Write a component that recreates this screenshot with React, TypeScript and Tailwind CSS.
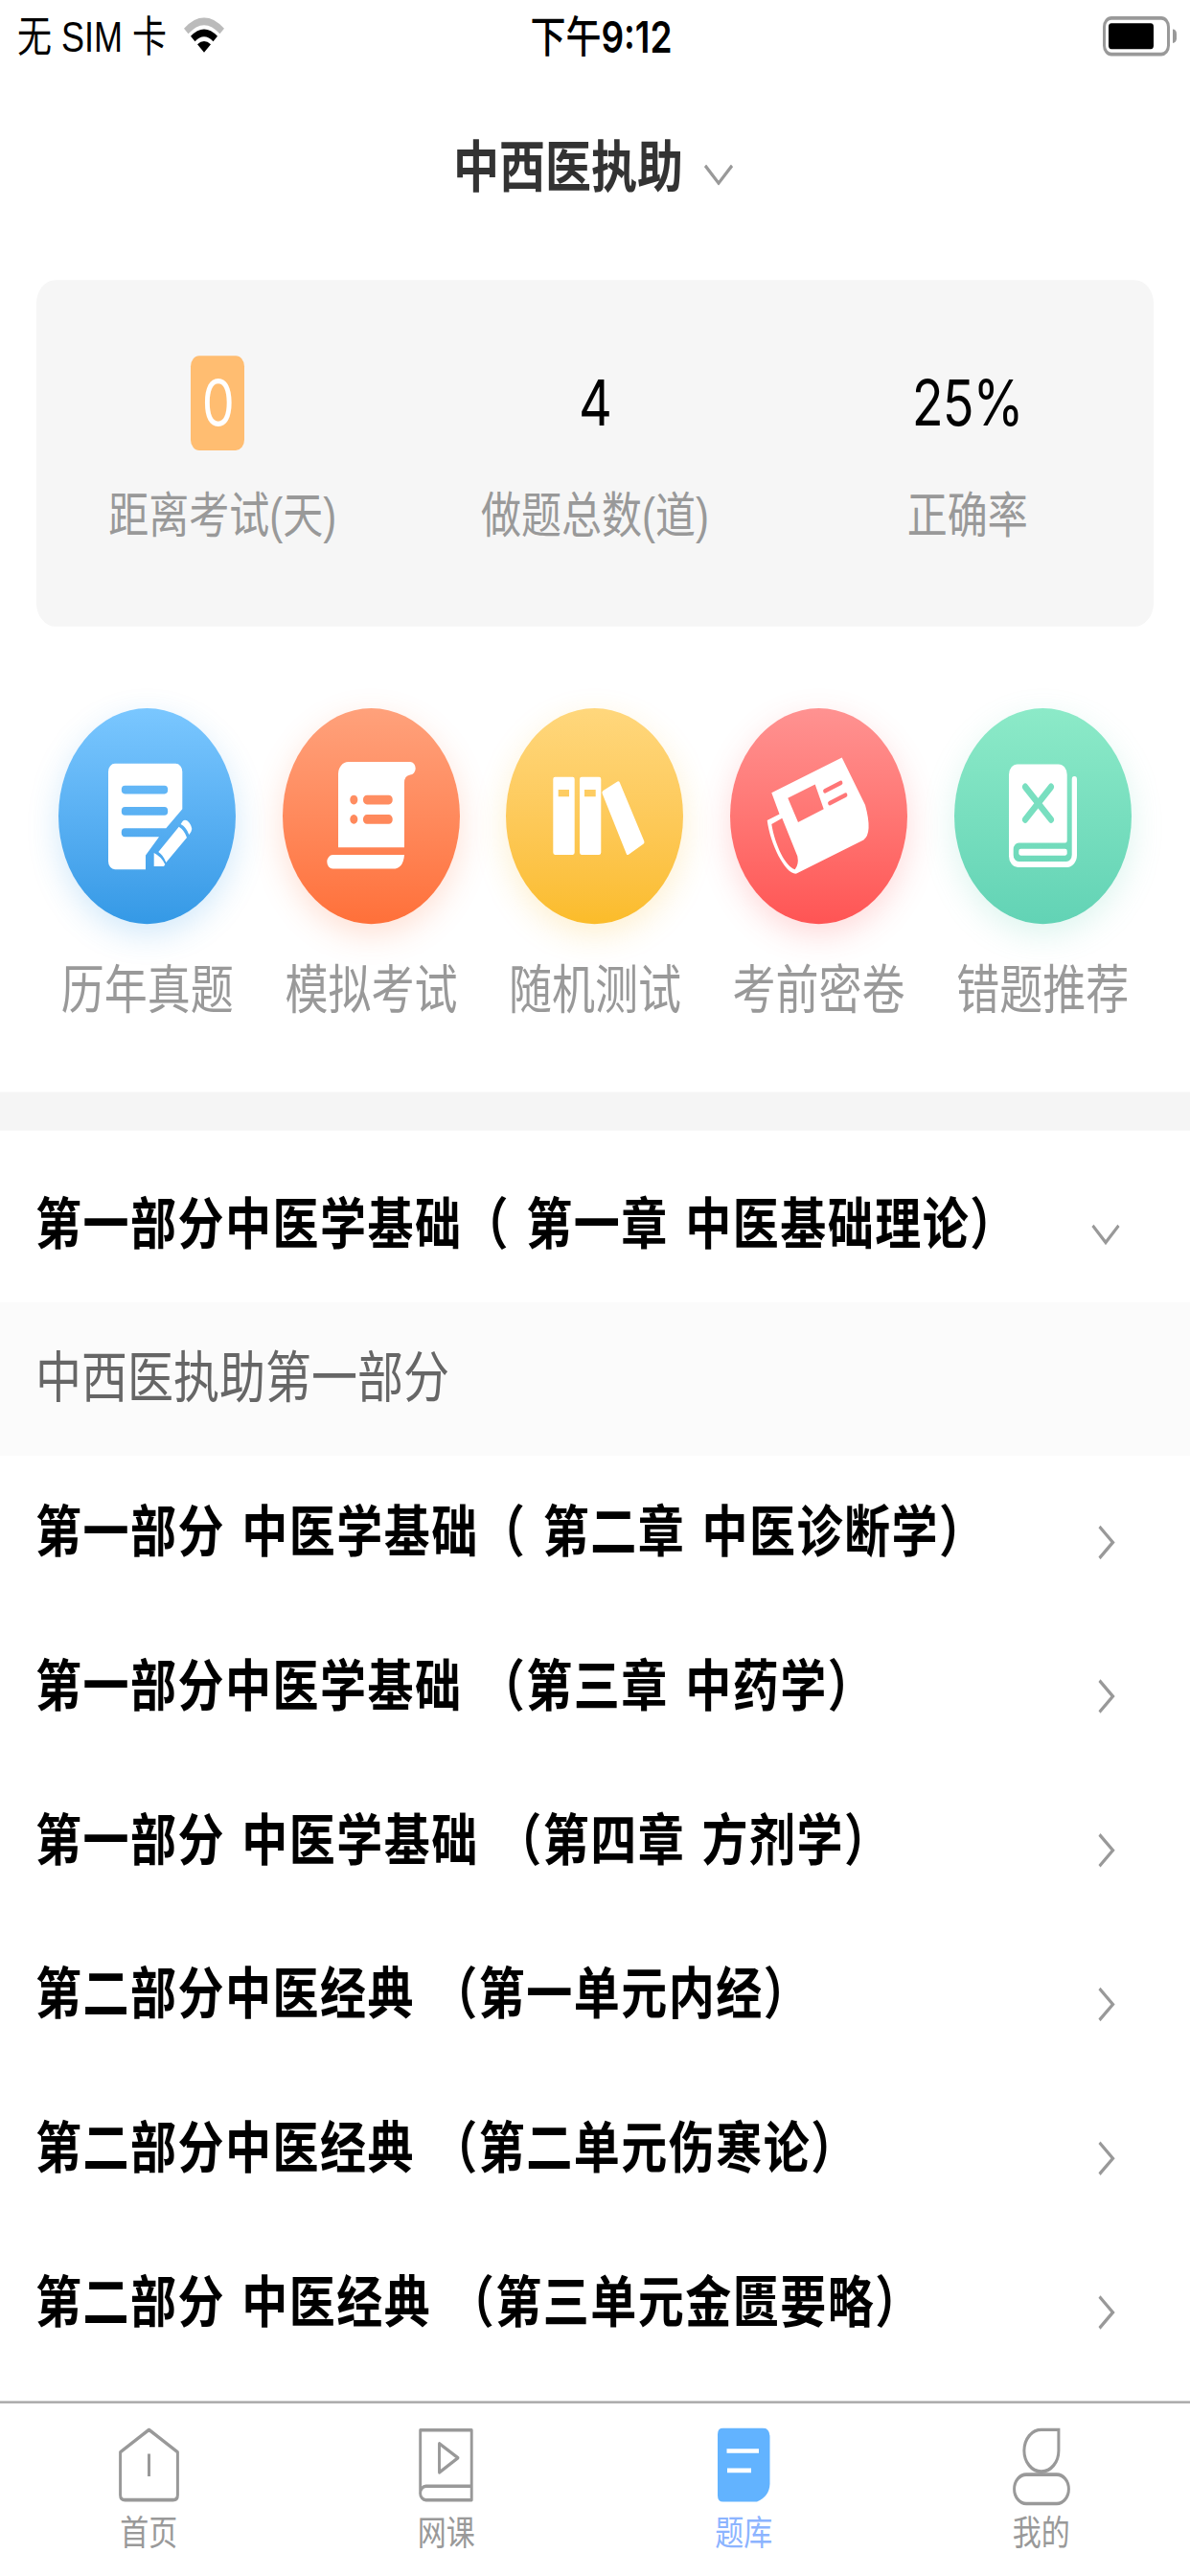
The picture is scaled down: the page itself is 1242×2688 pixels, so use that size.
import React, { useState } from 'react';

interface Chapter {
  id: number;
  title: string;
  children: string[];
}

const chapters: Chapter[] = [
  { id: 1, title: '第一部分中医学基础（ 第一章 中医基础理论）', children: ['中西医执助第一部分'] },
  { id: 2, title: '第一部分 中医学基础（ 第二章 中医诊断学）', children: [] },
  { id: 3, title: '第一部分中医学基础 （第三章 中药学）', children: [] },
  { id: 4, title: '第一部分 中医学基础 （第四章 方剂学）', children: [] },
  { id: 5, title: '第二部分中医经典 （第一单元内经）', children: [] },
  { id: 6, title: '第二部分中医经典 （第二单元伤寒论）', children: [] },
  { id: 7, title: '第二部分 中医经典 （第三单元金匮要略）', children: [] },
];

const entries = [
  { label: '历年真题', icon: <PaperIcon />, bg: 'from-[#7ac7ff] to-[#3499e6] shadow-[0_9px_30px_rgba(52,153,230,0.22)]' },
  { label: '模拟考试', icon: <ScrollIcon />, bg: 'from-[#ffa17b] to-[#ff7039] shadow-[0_9px_30px_rgba(255,112,57,0.22)]' },
  { label: '随机测试', icon: <BooksIcon />, bg: 'from-[#ffd77c] to-[#fbbc29] shadow-[0_9px_30px_rgba(251,188,41,0.22)]' },
  { label: '考前密卷', icon: <NewsIcon />, bg: 'from-[#ff9291] to-[#ff5454] shadow-[0_9px_30px_rgba(255,84,84,0.22)]' },
  { label: '错题推荐', icon: <WrongBookIcon />, bg: 'from-[#8ceac8] to-[#62d3b5] shadow-[0_9px_30px_rgba(98,211,181,0.22)]' },
];

const tabs = [
  { key: 'home', label: '首页', icon: <HomeIcon /> },
  { key: 'course', label: '网课', icon: <CourseIcon /> },
  { key: 'bank', label: '题库', icon: <BankIcon /> },
  { key: 'mine', label: '我的', icon: <MineIcon /> },
];

/* 入口图标 */
function PaperIcon() {
  return (
    <svg viewBox="0 0 185 185" className="w-full h-full" fill="#fff">
      <path d="M59 47.4H122.3a7 7 0 0 1 7 7V86.5L112.3 103H69.4a3.65 3.65 0 0 0 0 7.3H105L91 126.2V138.3H59a7 7 0 0 1-7-7V54.4a7 7 0 0 1 7-7ZM69.4 66.3a3.6 3.6 0 0 0 0 7.2H110.6a3.6 3.6 0 0 0 0-7.2ZM69.4 84.7a3.6 3.6 0 0 0 0 7.2H110.6a3.6 3.6 0 0 0 0-7.2Z" />
      <path d="M125.7 101.6Q131.5 104.5 134 110.9L112.3 132.2Q109.5 126 104.3 123.2Z" />
      <path d="M127.6 99.4L129.6 97Q131.6 95 134.6 96.5Q138.4 99 139.3 103.5Q139 106 136.3 108.4Q133.5 102 127.6 99.4Z" />
      <path d="M99.7 124Q108 127.5 111.3 134L110 135.5H99.7Z" />
    </svg>
  );
}

function ScrollIcon() {
  return (
    <svg viewBox="0 0 185 185" className="w-full h-full" fill="#fff">
      <path d="M58 119.4V56.5A10.5 10.5 0 0 1 68.5 46H133.1a5.6 5.6 0 0 1 0 11.2Q127 58 127 64V119.4ZM88 74.5a4 4 0 0 0 0 8.1H110.7a4 4 0 0 0 0-8.1ZM88 91.2a4 4 0 0 0 0 8.1H110.7a4 4 0 0 0 0-8.1ZM74.3 74.5a4 4 0 1 0 .01 0ZM74.3 91.2a4 4 0 1 0 .01 0Z" fillRule="evenodd" />
      <path d="M127 125.7Q126 137.7 115 137.7H52.3a6 6 0 0 1 0-12Z" />
    </svg>
  );
}

function BooksIcon() {
  return (
    <svg viewBox="0 0 185 185" className="w-full h-full" fill="#fff" fillRule="evenodd">
      <path d="M51.3 58.9H69.7a2 2 0 0 1 2 2V123.7a2 2 0 0 1-2 2H51.3a2 2 0 0 1-2-2V60.9a2 2 0 0 1 2-2ZM54.7 69.8V75.8H66V69.8Z" />
      <path d="M79 58.9H97.3a2 2 0 0 1 2 2V123.7a2 2 0 0 1-2 2H79a2 2 0 0 1-2-2V60.9a2 2 0 0 1 2-2ZM82 69.8V75.8H93.7V69.8Z" />
      <path d="M101.5 70.7L116.5 62.9Q118 62.3 118.8 63.6L144.3 114Q145 115.4 143.7 116.3L128 125.5Q126.5 126.3 125.8 124.8L100.5 73Q100 71.5 101.5 70.7Z" />
    </svg>
  );
}

function NewsIcon() {
  return (
    <svg viewBox="0 0 185 185" className="w-full h-full" fill="#fff">
      <path fillRule="evenodd" d="M43.3 72.6L116.7 42.4L141 83Q149 107 139.3 113L69.3 141.8C58 143 42 117 38.7 96.1L51.5 90.7ZM54.3 94.3L43.3 99.5C47 118 58 136 67.7 138.3Q72 134 70.3 127ZM60.3 77L88.7 65.4L97.7 86.5L71 97.7Z" />
      <path d="M99 71L115.5 64M104 81.5L120.5 74.5" stroke="#ff7677" strokeWidth="3.8" strokeLinecap="round" />
    </svg>
  );
}

function WrongBookIcon() {
  return (
    <svg viewBox="0 0 185 185" className="w-full h-full" fill="#fff">
      <path d="M57 127V57a9 9 0 0 1 9-9H108.7a9 9 0 0 1 9 9V113.5a2 2 0 0 1-2 2H67.2a5.5 5.5 0 0 0-5.5 5.5v4.9a5.5 5.5 0 0 0 5.5 5.5H117a5.7 5.7 0 0 0 5.7-5.7V61a2.65 2.65 0 0 1 5.3 0V126a10.3 10.3 0 0 1-10.3 10.3H66.3a9.3 9.3 0 0 1-9.3-9.3Z" />
      <rect x="67.3" y="120.5" width="50.4" height="5.8" rx="2" />
      <path d="M74 67.5L101 95.5M101 67.5L74 95.5" stroke="#79dfc0" strokeWidth="6" strokeLinecap="round" />
    </svg>
  );
}

/* 底部导航图标 */
function HomeIcon() {
  return (
    <svg viewBox="0 0 63 66" className="w-[63px] h-[66px]" fill="none" stroke="#999" strokeWidth="3" strokeLinejoin="round">
      <path d="M31.5 1.6L61.4 20.8V57.5Q61.4 61.8 56.5 61.8H6.5Q1.6 61.8 1.6 57.5V20.8Z" />
      <path d="M31.5 22.2V41.6" />
    </svg>
  );
}

function CourseIcon() {
  return (
    <svg viewBox="0 0 57 66" className="w-[57px] h-[66px]" fill="none" stroke="#999" strokeWidth="2.9" strokeLinejoin="round">
      <path d="M55.2 50H7.5a5.9 5.9 0 0 0 0 11.8H55.2V1.9H1.7V56" />
      <path d="M21.5 13.5V38.2L41 25.7Z" />
    </svg>
  );
}

function BankIcon() {
  return (
    <svg viewBox="0 0 55 66" className="w-[55px] h-[66px]">
      <path d="M5.5 0H47Q54.5 0 54.5 8V48Q54 59 41 63.4H5.5Q0 63.4 0 58V5.5Q0 0 5.5 0Z" fill="#62b3ff" />
      <path d="M9.5 19.8H43M10 36.5H35" stroke="#fff" strokeWidth="3.8" />
    </svg>
  );
}

function MineIcon() {
  return (
    <svg viewBox="0 0 60 67" className="w-[60px] h-[67px]" fill="none" stroke="#999" strokeWidth="3">
      <path d="M30 1.5H47.9V19.5A18 18 0 1 1 30 1.5Z" />
      <rect x="1.6" y="40" width="56.8" height="25" rx="12.5" />
    </svg>
  );
}

function StatusBar() {
  return (
    <div className="h-[62px] pl-[18px] pr-[14px] grid grid-cols-3 items-center text-black text-[36px] leading-none">
      <div className="flex items-center">
        <span className="whitespace-nowrap pt-[2px]">无 SIM 卡</span>
        <svg viewBox="0 0 42 32" className="w-[42px] h-[32px] ml-[18px]">
          <path d="M0 9.5Q21-9.5 42 9.5L37.5 14Q21-1 4.5 14Z" fill="#bbb" />
          <path d="M7 16Q21 4 35 16L30.5 20.5Q21 12.5 11.5 20.5Z" />
          <path d="M14 23Q21 17.5 28 23L21 30Z" />
        </svg>
      </div>
      <span className="text-center whitespace-nowrap font-semibold font-['Inter','Noto_Sans_CJK_SC',sans-serif] text-[37px] pl-[9px]">
        <span className="font-medium">下午</span>9:12
      </span>
      <div className="flex items-center justify-end gap-[3px]">
        <div className="w-[70px] h-[34px] border-[3px] border-[#999] rounded-[9px] p-[3px]">
          <div className="w-[47px] h-full bg-black rounded-[3px]" />
        </div>
        <div className="w-[4px] h-[12px] bg-[#999] rounded-r-full" />
      </div>
    </div>
  );
}

function Chevron({ open }: { open: boolean }) {
  return (
    <svg viewBox="0 0 32 32" className="w-[32px] h-[32px] mt-[16px]" fill="none" stroke="#999" strokeWidth="3">
      {open ? <path d="M2.5 8.5L16 23L29.5 8.5" /> : <path d="M9.5 2.5L23.5 16L9.5 29.5" />}
    </svg>
  );
}

export default function App() {
  const [openId, setOpenId] = useState<number | null>(1);
  const [tab, setTab] = useState('bank');

  return (
    <div className="w-[1242px] h-[2688px] overflow-hidden bg-white">
      <div className="w-[1242px] h-[2208px] origin-top scale-y-[1.2174] flex flex-col bg-white font-['Liberation_Sans','Noto_Sans_CJK_SC',sans-serif]">
        <StatusBar />

        {/* 标题 */}
        <div className="h-[164px] pr-[4px] flex items-center justify-center gap-[22px] text-[#333]">
          <h1 className="text-[48px] leading-none font-bold">中西医执助</h1>
          <svg viewBox="0 0 30 18" className="w-[30px] h-[18px] mt-[12px]" fill="none" stroke="#999" strokeWidth="3">
            <path d="M1 1L15 16L29 1" />
          </svg>
        </div>

        {/* 统计 */}
        <div className="mx-[38px] mt-[14px] h-[297px] pt-[65px] grid grid-cols-3 bg-[#f6f6f6] rounded-[20px] text-center">
          <div className="flex flex-col items-center">
            <div className="h-[81px] w-[56px] mr-[10px] rounded-[9px] bg-[#ffbd71] text-white text-[54px] leading-[82px] tracking-[-1px] font-['Inter',sans-serif]">0</div>
            <div className="mt-[36px] text-[42px] leading-[42px] text-[#999]">距离考试(天)</div>
          </div>
          <div className="flex flex-col items-center">
            <div className="text-black text-[54px] leading-[82px] h-[81px] tracking-[-1px] font-['Inter',sans-serif]">4</div>
            <div className="mt-[36px] text-[42px] leading-[42px] text-[#999]">做题总数(道)</div>
          </div>
          <div className="flex flex-col items-center">
            <div className="text-black text-[54px] leading-[82px] h-[81px] tracking-[-1px] font-['Inter',sans-serif]">25%</div>
            <div className="mt-[36px] text-[42px] leading-[42px] text-[#999]">正确率</div>
          </div>
        </div>

        {/* 功能入口 */}
        <div className="mt-[70px] px-[37px] grid grid-cols-5 pb-[65px]">
          {entries.map(e => (
            <button key={e.label} className="flex flex-col items-center">
              <span className={`block w-[185px] h-[185px] rounded-full bg-linear-to-b ${e.bg}`}>{e.icon}</span>
              <span className="mt-[34px] text-[45px] leading-[45px] text-[#999]">{e.label}</span>
            </button>
          ))}
        </div>

        <div className="h-[33px] bg-[#f5f5f5]" />

        {/* 章节列表 */}
        <div className="pt-[15px]">
          {chapters.map(c => (
            <div key={c.id}>
              <div
                onClick={() => setOpenId(openId === c.id ? null : c.id)}
                className="h-[132px] pl-[37px] pr-[72px] flex items-center justify-between"
              >
                <span className="text-[48px] leading-none font-bold text-black tracking-[1.5px] [word-spacing:2.5px] whitespace-nowrap">
                  {c.title}
                </span>
                <Chevron open={openId === c.id} />
              </div>
              {openId === c.id && c.children.map(name => (
                <div key={name} className="h-[132px] pl-[37px] flex items-center bg-[#fbfbfb] text-[48px] leading-none text-[#666]">
                  {name}
                </div>
              ))}
            </div>
          ))}
        </div>

        {/* 底部导航 */}
        <div className="mt-auto h-[150px] pt-[21px] border-t-2 border-[#a8a8a8] grid grid-cols-4">
          {tabs.map(t => (
            <button key={t.key} onClick={() => setTab(t.key)} className="flex flex-col items-center">
              <span className="h-[66px]">{t.icon}</span>
              <span className={`mt-[10px] text-[30px] leading-[30px] ${tab === t.key ? 'text-[#8cb4ff]' : 'text-[#999]'}`}>
                {t.label}
              </span>
            </button>
          ))}
        </div>
      </div>
    </div>
  );
}
